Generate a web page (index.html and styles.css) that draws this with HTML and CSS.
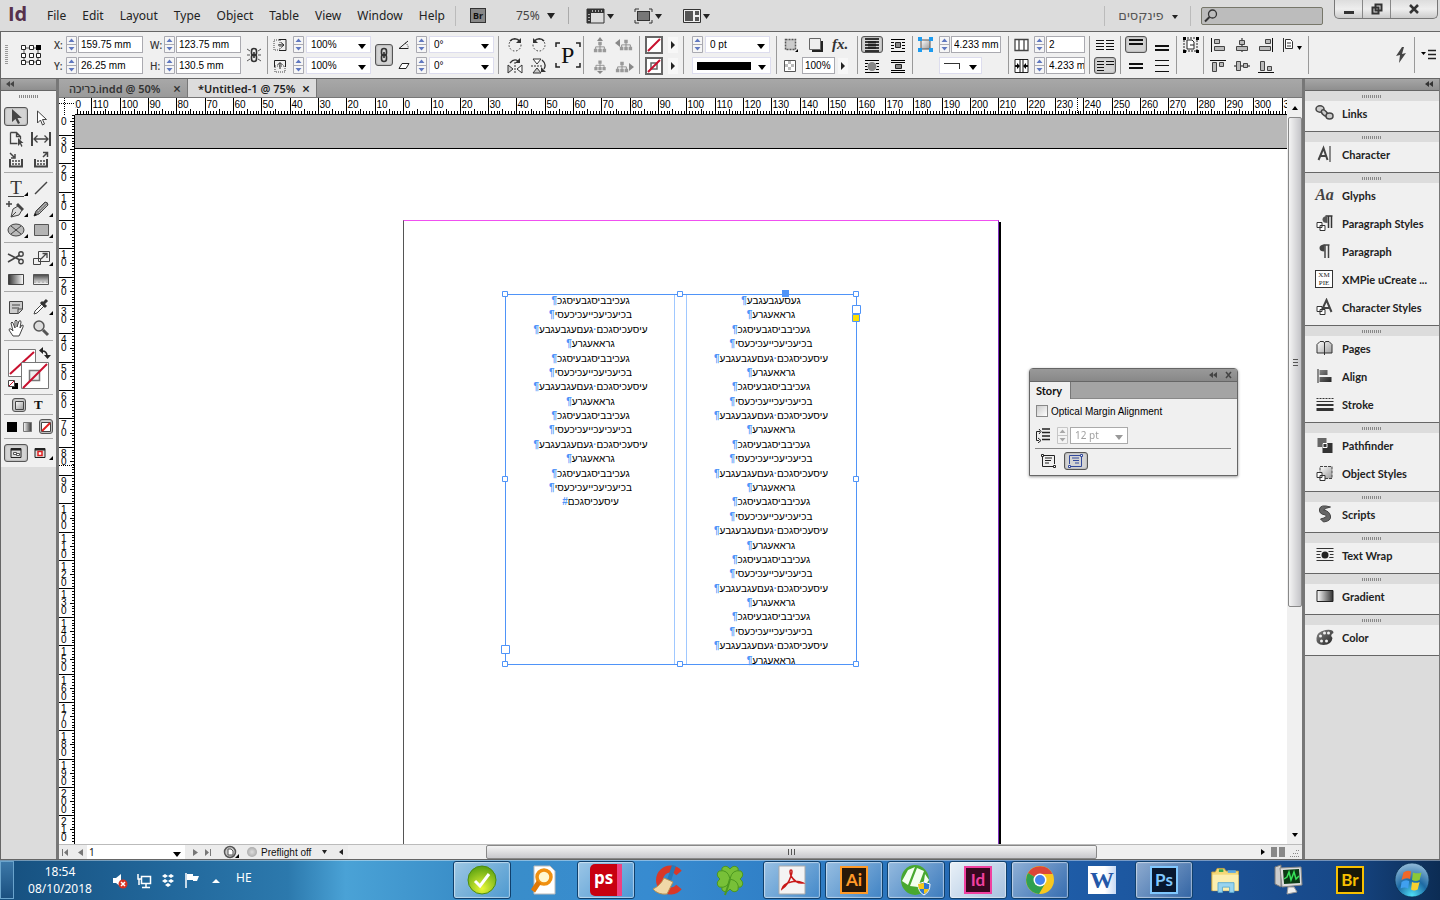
FILE: index.html
```html
<!DOCTYPE html>
<html lang="en">
<head>
    <meta charset="UTF-8">
    <title>*Untitled-1 @ 75%</title>
    <meta name="viewport" content="width=device-width, initial-scale=1.0">
    <link rel="stylesheet" href="styles.css">
</head>
<body>
    <!-- shared icons -->
    <svg class="defs" aria-hidden="true">
        <defs>
            <linearGradient id="gDark" x1="0" y1="0" x2="1" y2="1"><stop offset="0" stop-color="#888"/><stop offset="1" stop-color="#222"/></linearGradient>
            <linearGradient id="gFade" x1="0" x2="1"><stop offset="0" stop-color="#333"/><stop offset="1" stop-color="#fff"/></linearGradient>
            <linearGradient id="gFadeR" x1="0" x2="1"><stop offset="0" stop-color="#fff"/><stop offset="1" stop-color="#333"/></linearGradient>
            <linearGradient id="gLight" x1="0" y1="0" x2="1" y2="1"><stop offset="0" stop-color="#fff"/><stop offset="1" stop-color="#999"/></linearGradient>
            <linearGradient id="gFeather" x1="0" y1="0" x2="0" y2="1"><stop offset="0" stop-color="#444"/><stop offset="1" stop-color="#fff"/></linearGradient>
            <radialGradient id="gGreen" cx=".5" cy=".8" r=".8"><stop offset="0" stop-color="#e8f838"/><stop offset="1" stop-color="#58a010"/></radialGradient>
            <radialGradient id="gOrb" cx=".5" cy=".95" r=".9"><stop offset="0" stop-color="#4fe0f8"/><stop offset=".5" stop-color="#1d6aa4"/><stop offset="1" stop-color="#8ab4d4"/></radialGradient>
        </defs>
        <symbol id="spin" viewBox="0 0 11 17"><path d="M.5.5h10v16H.5zM.5 8.500h10" fill="#f6f6f6" stroke="#aaaab2"/><path d="M2.500 6h6l-3-3.500zM2.500 11h6l-3 3.500z" fill="#6078c0"/></symbol>
        <symbol id="right" viewBox="0 0 10 16"><path d="M0 0h10v16H0z" fill="#f7f7f7"/><path d="M3 4l4 4-4 4z" fill="#222"/></symbol>
        <symbol id="chain" viewBox="0 0 14 16"><g fill="none" stroke="#333" stroke-width="1.600"><rect x="4.500" y="1.500" width="5" height="7" rx="2.500"/><rect x="4.500" y="7.500" width="5" height="7" rx="2.500"/><path d="M7 5v6"/></g></symbol>
        <symbol id="tree" viewBox="0 0 18 16"><path d="M9 4v5M4 12V9h10v3M9 9v3" fill="none" stroke="#888"/><path d="M7 3h4v4H7zM2 11h4v4H2zM7 11h4v4H7zM12 11h4v4h-4z" fill="#999"/></symbol>
        <symbol id="rot" viewBox="0 0 16 16"><circle cx="8" cy="8" r="6" fill="none" stroke="#333" stroke-dasharray="1.500 1.800"/><path d="M3 4a6 6 0 0 1 9.500 0" fill="none" stroke="#333" stroke-width="1.500"/><path d="M14 1v5H9z" fill="#333"/></symbol>
        <symbol id="corner" viewBox="0 0 4 4"><path d="M4 0v4H0z"/></symbol>
    </svg>

    <header class="menubar">
        <b class="logo">Id</b>
        <nav>
            <button>File</button><button>Edit</button><button>Layout</button><button>Type</button><button>Object</button><button>Table</button><button>View</button><button>Window</button><button>Help</button>
        </nav>
        <div class="viewtools">
            <button class="bridge">Br</button>
            <label class="zoom"><select aria-label="Zoom"><option>75%</option></select></label>
            <button aria-label="View options"><svg width="28" height="18"><path d="M1 2h17v14H1z" fill="#ddd" stroke="#333"/><path d="M1 2h17v4H1zM1 2h4v14H1z" fill="#333"/><path d="M6 4h11M3 7v8" stroke="#aaa" stroke-width="2" stroke-dasharray="1 2"/><path d="M21 7h7l-3.500 5z" fill="#222"/></svg></button>
            <button aria-label="Screen mode"><svg width="28" height="18"><path d="M1 5V2h4M15 2h3v3M18 13v3h-3M5 16H1v-3" fill="none" stroke="#333"/><rect x="3.500" y="4.500" width="12" height="9" fill="#777" stroke="#333"/><path d="M21 7h7l-3.500 5z" fill="#222"/></svg></button>
            <button aria-label="Arrange documents"><svg width="28" height="18"><path d="M1.500 2.500h17v13h-17z" fill="#eee" stroke="#333"/><path d="M3 4h8v10H3zM13 4h4v4h-4zM13 10h4v4h-4z" fill="#555"/><path d="M21 7h7l-3.500 5z" fill="#222"/></svg></button>
        </div>
        <button class="workspace" lang="he">פינקסים</button>
        <label class="search"><svg width="14" height="14"><circle cx="8.500" cy="5" r="4" fill="none" stroke="#333" stroke-width="1.300"/><path d="M5.500 8L1 12.500" stroke="#333" stroke-width="2"/></svg><input type="search" aria-label="Search"></label>
        <div class="winbtns">
            <button aria-label="Minimize"><svg width="12" height="12"><path d="M1 8h10v3H1z" fill="#333"/></svg></button>
            <button aria-label="Restore"><svg width="12" height="12"><path d="M4.500 1.500h6v6h-6zM1.500 4.500h6v6h-6z" fill="#ddd" stroke="#333" stroke-width="2"/></svg></button>
            <button class="close" aria-label="Close"><svg width="12" height="12"><path d="M2 2l8 8M10 2l-8 8" stroke="#333" stroke-width="2.500"/></svg></button>
        </div>
    </header>

    <div class="control">
        <div class="grp g-ref">
            <i class="vgrip"></i>
            <svg width="20" height="20"><path d="M3 3h14v14H3z" fill="none" stroke="#555"/><g fill="#fff" stroke="#222"><path d="M.5.5h4v4h-4zM8.500.5h4v4h-4zM.5 8.500h4v4h-4zM8.500 8.500h4v4h-4zM15.500 8.500h4v4h-4zM.5 15.500h4v4h-4zM8.500 15.500h4v4h-4zM15.500 15.500h4v4h-4z"/></g><path d="M15 0h5v5h-5z"/></svg>
        </div>
        <div class="grp g-xy">
            <label for="x">X:</label><svg class="spin"><use href="#spin"/></svg><input id="x" value="159.75 mm">
            <label for="w">W:</label><svg class="spin"><use href="#spin"/></svg><input id="w" value="123.75 mm">
            <label for="y">Y:</label><svg class="spin"><use href="#spin"/></svg><input id="y" value="26.25 mm">
            <label for="h">H:</label><svg class="spin"><use href="#spin"/></svg><input id="h" value="130.5 mm">
        </div>
        <button class="constrain" aria-label="Constrain"><svg width="14" height="16"><use href="#chain"/><path d="M0 2l3 2M0 8h3M0 14l3-2M14 2l-3 2M14 8h-3M14 14l-3-2" stroke="#555"/></svg></button>
        <div class="grp sep g-scale">
            <svg width="14" height="14"><path d="M1 2h6v10H1z" fill="none" stroke="#444" stroke-dasharray="1 1"/><path d="M6 1.500h7v11H6" fill="none" stroke="#222"/><path d="M5 7h5M8 4.500L11 7 8 9.500" fill="none" stroke="#222"/></svg>
            <svg class="spin"><use href="#spin"/></svg><span class="combo"><select aria-label="Scale X"><option>100%</option></select></span>
            <svg width="14" height="14"><path d="M2 7h10v6H2z" fill="none" stroke="#444" stroke-dasharray="1 1"/><path d="M1.500 8V1.500h11V8" fill="none" stroke="#222"/><path d="M7 10V4M4.500 6L7 3.500 9.500 6" fill="none" stroke="#222"/></svg>
            <svg class="spin"><use href="#spin"/></svg><span class="combo"><select aria-label="Scale Y"><option>100%</option></select></span>
        </div>
        <button class="link on" aria-label="Link scale"><svg width="14" height="16"><use href="#chain"/></svg></button>
        <div class="grp g-angle">
            <svg width="14" height="14"><path d="M11 3L2 10.500h9" fill="none" stroke="#222"/><path d="M8 5q4 2 3 6" fill="none" stroke="#222" stroke-dasharray="1 1"/></svg>
            <svg class="spin"><use href="#spin"/></svg><span class="combo"><select aria-label="Rotation"><option>0°</option></select></span>
            <svg width="14" height="14"><path d="M5 4.500h7l-3 5H2z" fill="#fff" stroke="#222"/></svg>
            <svg class="spin"><use href="#spin"/></svg><span class="combo"><select aria-label="Shear"><option>0°</option></select></span>
        </div>
        <div class="grp sep g-rotate">
            <button aria-label="Rotate 90 clockwise"><svg width="16" height="16"><use href="#rot"/></svg></button>
            <button aria-label="Rotate 90 anticlockwise"><svg width="16" height="16"><g transform="matrix(-1 0 0 1 16 0)"><use href="#rot" width="16" height="16"/></g></svg></button>
            <button class="pbox" aria-label="Reference P"><svg width="26" height="26"><path d="M1 5V1h4M21 1h4v4M25 21v4h-4M5 25H1v-4" fill="none" stroke="#222" stroke-width="1.500"/></svg><span>P</span></button>
            <button aria-label="Flip horizontal"><svg width="16" height="16"><path d="M8 4v12" stroke="#333" stroke-dasharray="2 1"/><path d="M1 15V7l5 4z" fill="#ccc" stroke="#333"/><path d="M15 15V7l-5 4z" fill="#fff" stroke="#333"/><path d="M3 5q4-5 8-2" fill="none" stroke="#333" stroke-width="1.300"/><path d="M13 0v5H8z" fill="#333"/></svg></button>
            <button aria-label="Flip vertical"><svg width="16" height="16"><path d="M0 8h12" stroke="#333" stroke-dasharray="2 1"/><path d="M2 1h8L6 6z" fill="#fff" stroke="#333"/><path d="M2 15h8l-4-5z" fill="#ccc" stroke="#333"/><path d="M11 2q5 4 2 9" fill="none" stroke="#333" stroke-width="1.300"/><path d="M10 9v5h5z" fill="#333"/></svg></button>
        </div>
        <div class="grp sep g-tree">
            <svg width="18" height="16"><use href="#tree" y="2" width="18" height="14"/><path d="M6 4h6L9 0z" fill="#888"/></svg>
            <svg width="20" height="16"><path d="M0 6l5-4v8z" fill="#888"/><use href="#tree" x="3" width="16" height="14"/></svg>
            <svg width="18" height="16"><use href="#tree" width="18" height="13"/><path d="M6 13h6l-3 3z" fill="#888"/></svg>
            <svg width="20" height="16"><path d="M19 9l-5-4v8z" fill="#888"/><use href="#tree" x="-1" y="1" width="16" height="14"/></svg>
        </div>
        <div class="grp sep g-swatch">
            <button aria-label="Fill"><svg width="18" height="18"><path d="M1 1h16v16H1z" fill="#fff" stroke="#666" stroke-width="2"/><path d="M3 15L15 3" stroke="#c8102e" stroke-width="2"/></svg></button><svg width="10" height="16"><use href="#right"/></svg>
            <button aria-label="Stroke"><svg width="18" height="18"><path d="M1 1h16v16H1z" fill="#fff" stroke="#666" stroke-width="2"/><path d="M6 6h6v6H6z" fill="none" stroke="#666" stroke-width="1.500"/><path d="M3 15L15 3" stroke="#c8102e" stroke-width="2"/></svg></button><svg width="10" height="16"><use href="#right"/></svg>
        </div>
        <div class="grp sep g-stroke">
            <svg class="spin"><use href="#spin"/></svg><span class="combo"><select aria-label="Weight"><option>0 pt</option></select></span>
            <span class="combo wide line"><select aria-label="Stroke type"><option></option></select></span>
        </div>
        <div class="grp sep g-fx">
            <svg width="16" height="16"><path d="M2.500 2.500h10v10h-10z" fill="#ccc" stroke="#555" stroke-width="1.500" stroke-dasharray="2 1"/><use href="#corner" x="12" y="12" width="3" height="3"/></svg>
            <svg width="16" height="16"><path d="M4 4h11v11H4z" fill="#222"/><path d="M1.500 1.500h11v11h-11z" fill="#eee" stroke="#666"/></svg>
            <button class="fx">fx.</button>
            <svg width="14" height="14"><path d="M1.500 1.500h11v11h-11z" fill="#fff" stroke="#555"/><path d="M5 2h3v3H5zM2 5h3v3H2zM8 5h3v3H8zM5 8h3v3H5z" fill="#bbb"/></svg>
            <input aria-label="Opacity" value="100%"><svg width="10" height="16"><use href="#right"/></svg>
        </div>
        <div class="grp sep g-wrap">
            <button class="on" aria-label="No wrap"><svg width="16" height="14"><path d="M4 3h8v8H4z" fill="#888"/><path d="M1 1h14M1 4h14M1 7h14M1 10h14M1 13h14" stroke="#000" stroke-width="1.600"/></svg></button>
            <button aria-label="Wrap box"><svg width="16" height="14"><path d="M1 1.500h14M1 4.500h3M1 7.500h3M1 10.500h3M12 4.500h3M12 7.500h3M12 10.500h3M1 13.500h14" stroke="#000"/><path d="M5.500 4.500h5v5h-5z" fill="#888" stroke="#222"/></svg></button>
            <button aria-label="Wrap shape"><svg width="16" height="14"><path d="M1 1.500h14M1 4.500h3M1 7.500h2M1 10.500h3M12 4.500h3M13 7.500h2M12 10.500h3M1 13.500h14" stroke="#000"/><circle cx="8" cy="7.500" r="4.500" fill="#888"/></svg></button>
            <button aria-label="Jump object"><svg width="16" height="14"><path d="M1 1.500h14M1 3.500h14M1 11.500h14M1 13.500h14" stroke="#000"/><path d="M5.500 5.500h6v4h-6z" fill="#888" stroke="#222"/></svg></button>
        </div>
        <div class="grp sep g-corner">
            <svg width="15" height="15"><path d="M3 3h9v9H3z" fill="url(#gLight)" stroke="#555"/><path d="M0 0h4v4H0zM11 0h4v4h-4zM0 11h4v4H0zM11 11h4v4h-4z" fill="#1c9bf0"/></svg>
            <svg class="spin"><use href="#spin"/></svg><input aria-label="Corner size" value="4.233 mm">
            <span class="combo wide cornershape"><select aria-label="Corner shape"><option></option></select></span>
        </div>
        <div class="grp sep g-cols">
            <svg width="15" height="14"><path d="M1 1.500h13v11H1zM5 1v12M10 1v12" fill="#fff" stroke="#444" stroke-width="1.300"/></svg><svg class="spin"><use href="#spin"/></svg><input aria-label="Columns" value="2">
            <svg width="15" height="14"><path d="M1 .5h13v13H1z" fill="#fff" stroke="#222"/><path d="M6 0v14M9 0v14" stroke="#111"/><path d="M1 7h3M14 7h-3" stroke="#111" stroke-width="2"/><path d="M3 4l3 3-3 3zM12 4L9 7l3 3z"/></svg><svg class="spin"><use href="#spin"/></svg><input aria-label="Gutter" value="4.233 mm">
        </div>
        <div class="grp sep g-one">
            <button aria-label="Unbalanced columns"><svg width="18" height="12"><path d="M0 1.500h8M0 4.500h8M0 7.500h8M0 10.500h8M10 1.500h8M10 4.500h8M10 7.500h8M10 10.500h8" stroke="#111"/></svg></button>
            <button class="on" aria-label="Balance columns"><svg width="18" height="12"><path d="M1 1.500h7M1 4.500h7M1 7.500h7M1 10.500h7M10 1.500h8M10 4.500h8" stroke="#111"/></svg></button>
        </div>
        <div class="grp sep g-just">
            <button class="on" aria-label="Align top"><svg width="16" height="14"><path d="M1 2h14M1 6h14" stroke="#111" stroke-width="2"/></svg></button>
            <button aria-label="Align bottom"><svg width="16" height="14"><path d="M1 8h14M1 12h14" stroke="#111" stroke-width="2"/></svg></button>
            <button aria-label="Align center"><svg width="16" height="14"><path d="M1 5h14M1 9h14" stroke="#111" stroke-width="2"/></svg></button>
            <button aria-label="Justify"><svg width="16" height="14"><path d="M1 1.500h14M1 6.500h14M1 12.500h14" stroke="#111"/></svg></button>
        </div>
        <div class="grp sep g-fit">
            <button aria-label="Fit content"><svg width="18" height="18"><path d="M2 2h13v13H2z" fill="none" stroke="#222" stroke-dasharray="2 1"/><path d="M5 4h5l2 2v7H5zM8 9h4" fill="#fff" stroke="#222"/><path d="M1 1h3v3H1zM14 1h3v3h-3zM1 14h3v3H1zM14 14h3v3h-3z"/></svg></button>
        </div>
        <div class="grp sep g-align">
            <svg width="16" height="14"><path d="M1.500 0v14" stroke="#111"/><path d="M4.500 1.500h5v4h-5zM4.500 8.500h10v4h-10z" fill="#bbb" stroke="#444"/></svg>
            <svg width="16" height="14"><path d="M8 0v14" stroke="#111"/><path d="M5.500 2.500h5v4h-5zM2.500 8.500h11v4h-11z" fill="#bbb" stroke="#444"/></svg>
            <svg width="16" height="14"><path d="M14.500 0v14" stroke="#111"/><path d="M7.500 1.500h5v4h-5zM1.500 8.500h11v4h-11z" fill="#bbb" stroke="#444"/></svg>
            <svg width="20" height="14"><path d="M1.500 0v14M3.500 1.500h5l2 2v7h-7z" fill="#fff" stroke="#333"/><path d="M5 5h4M5 8h4" stroke="#333"/><path d="M15 8h5l-2.500 4z"/></svg>
            <svg width="16" height="14"><path d="M0 1.500h16" stroke="#111"/><path d="M2.500 3.500h4v9h-4zM9.500 3.500h4v4h-4z" fill="#bbb" stroke="#444"/></svg>
            <svg width="16" height="14"><path d="M0 7h16" stroke="#111"/><path d="M2.500 2.500h4v9h-4zM9.500 4.500h4v4h-4z" fill="#bbb" stroke="#444"/></svg>
            <svg width="16" height="14"><path d="M0 13.500h16" stroke="#111"/><path d="M2.500 2.500h4v9h-4zM9.500 7.500h4v4h-4z" fill="#bbb" stroke="#444"/></svg>
        </div>
        <div class="grp sep g-end">
            <button aria-label="Quick apply"><svg width="12" height="18"><path d="M7 1L1 10l4-1-1 8 7-10-4 1 2-7z" fill="#444"/></svg></button>
            <button class="panelmenu" aria-label="Panel menu"><svg width="15" height="14"><path d="M0 4h5l-2.500 3z"/><path d="M7 2.500h8M7 6.500h8M7 10.500h8" stroke="#222" stroke-width="1.300"/></svg></button>
        </div>
    </div>

    <main class="work">
        <aside class="toolbox">
            <div class="bar"><svg width="9" height="7"><path d="M4 0v6L0 3zM8 0v6L4 3z" fill="#444"/></svg></div>
            <div class="tools">
                <i class="hgrip"></i>
                <div class="toolset">
                    <button class="on" aria-label="Selection"><svg width="18" height="18"><path d="M5 1v13l3.500-3 2.500 5 2-1-2.500-5H15z" fill="#444"/></svg></button>
                    <button aria-label="Direct selection"><svg width="18" height="18"><path d="M5.500 2v12l3-3 2 5 2-1-2-4.500h4z" fill="#fff" stroke="#444"/></svg></button>
                    <button aria-label="Page"><svg width="18" height="18"><path d="M3.500 2.500h6l4 4v3M3.500 2.500v11h7M9.500 2.500v4h4" fill="none" stroke="#444" stroke-width="1.300"/><path d="M11 8v8l2-2 1.500 3 1-1-1.500-3h2.500z" fill="#444"/></svg></button>
                    <button aria-label="Gap"><svg width="20" height="18"><path d="M1 2v14M19 2v14" stroke="#444" stroke-width="2"/><path d="M3 9h14M6.500 5.500L3 9l3.500 3.500M13.500 5.500L17 9l-3.500 3.500" fill="none" stroke="#444" stroke-width="1.300"/></svg></button>
                    <button aria-label="Content collector"><svg width="18" height="18"><path d="M3 8v7.500h12V8" fill="none" stroke="#444" stroke-width="2"/><path d="M5 10h8M5 13h8" stroke="#444" stroke-width="1.500" stroke-dasharray="2 1"/><path d="M3 2l4 4M8 3v4H4" fill="none" stroke="#444" stroke-width="1.500"/></svg></button>
                    <button aria-label="Content placer"><svg width="18" height="18"><path d="M3 8v7.500h12V8" fill="none" stroke="#444" stroke-width="2"/><path d="M5 10h8M5 13h8" stroke="#444" stroke-width="1.500" stroke-dasharray="2 1"/><path d="M11 6l4-4M11 1.500h4.500V6" fill="none" stroke="#444" stroke-width="1.500"/></svg></button>
                </div>
                <div class="toolset">
                    <button class="more type" aria-label="Type"><span>T</span></button>
                    <button aria-label="Line"><svg width="18" height="18"><path d="M3 15L15 3" stroke="#444" stroke-width="1.500"/></svg></button>
                    <button class="more" aria-label="Pen"><svg width="20" height="18"><path d="M0 4h6M3 1v6" stroke="#444" stroke-width="1.500"/><path d="M5 17l2-8 5-3 4 4-3 5zM5 17l5-5" fill="#ddd" stroke="#444"/><path d="M12 3l6 6-2 2-6-6z" fill="#444"/></svg></button>
                    <button class="more" aria-label="Pencil"><svg width="18" height="18"><path d="M2 16l2-5 9-9q3 0 3 3l-9 9z" fill="#888" stroke="#444"/><path d="M6 11l8-8M7 13l8-8" stroke="#ccc" stroke-dasharray="2 1"/><path d="M2 16l1-3 2 2z" fill="#111"/></svg></button>
                    <button class="more" aria-label="Ellipse frame"><svg width="18" height="18"><ellipse cx="9" cy="9" rx="8" ry="6" fill="#bbb" stroke="#444"/><path d="M4 5l10 8M14 5L4 13" stroke="#444"/></svg></button>
                    <button class="more" aria-label="Rectangle"><svg width="18" height="18"><path d="M2.500 3.500h14v11h-14z" fill="#b4b4b4" stroke="#555"/></svg></button>
                </div>
                <div class="toolset">
                    <button aria-label="Scissors"><svg width="18" height="18"><path d="M1 5l12 6M1 13L13 6" stroke="#444" stroke-width="1.600"/><circle cx="14" cy="5" r="2.200" fill="none" stroke="#444" stroke-width="1.400"/><circle cx="14" cy="12.500" r="2.200" fill="none" stroke="#444" stroke-width="1.400"/></svg></button>
                    <button class="more" aria-label="Scale"><svg width="18" height="18"><path d="M6.500 2.500h11v10h-11zM1.500 9.500h7v6h-7z" fill="none" stroke="#444"/><path d="M9 10l5-5M10.500 4.500H15V9" fill="none" stroke="#444" stroke-width="1.300"/></svg></button>
                    <button aria-label="Gradient swatch"><svg width="18" height="18"><path d="M1.500 4.500h15v10h-15z" fill="url(#gFade)" stroke="#444"/></svg></button>
                    <button aria-label="Gradient feather"><svg width="18" height="18"><path d="M1.500 4.500h15v10h-15z" fill="url(#gFeather)" stroke="#555"/><path d="M2 12h14" stroke="#bbb" stroke-width="2" stroke-dasharray="2 2"/></svg></button>
                </div>
                <div class="toolset">
                    <button aria-label="Note"><svg width="18" height="18"><path d="M2.500 3.500h13v8l-4 4h-9z" fill="#ccc" stroke="#444"/><path d="M5 7h8M5 10h7M11 15v-4h4" fill="none" stroke="#444"/></svg></button>
                    <button class="more" aria-label="Eyedropper"><svg width="18" height="18"><path d="M2 16l1-3 7-7 2 2-7 7z" fill="#fff" stroke="#444"/><path d="M9 4l5 5M11 6l4-4" stroke="#333" stroke-width="3"/></svg></button>
                    <button aria-label="Hand"><svg width="18" height="18"><path d="M6 17l-4-6q0-2 2-1l2 2-2-8q1-2 2 0l2 5V2q1-2 2 0v6l2-6q2-1 2 1l-1 6 2-3q2 0 1 2l-3 7-1 2z" fill="#fff" stroke="#444"/></svg></button>
                    <button aria-label="Zoom"><svg width="18" height="18"><circle cx="7" cy="7" r="5" fill="#ddd" stroke="#555" stroke-width="1.500"/><path d="M11 11l5 5" stroke="#555" stroke-width="3"/></svg></button>
                </div>
                <div class="strip colors">
                    <svg width="44" height="44"><path d="M1.500 3.500h27v27h-27z" fill="#fff" stroke="#777"/><path d="M3 28L27 6" stroke="#c8102e" stroke-width="2"/><path d="M14.500 16.500h27v26h-27z" fill="#fff" stroke="#777"/><path d="M22.500 24.500h10v10h-10z" fill="#eee" stroke="#777" stroke-width="1.500"/><path d="M16 42L40 18" stroke="#c8102e" stroke-width="2"/><path d="M35 5q5 0 5 5" fill="none" stroke="#222" stroke-width="1.500"/><path d="M36 1v7l-4-3.500zM37 9h7l-3.500 4z" fill="#222"/><path d="M5 37h6v6H5z"/><path d="M1.500 34.500h6v6h-6z" fill="#fff" stroke="#444"/><path d="M2 40l5-5" stroke="#c8102e"/></svg>
                </div>
                <div class="strip row fmt">
                    <button class="on" aria-label="Formatting affects container"><svg width="10" height="10"><path d="M1.500 1.500h8v8h-8z" fill="url(#gLight)" stroke="#444"/></svg></button>
                    <button class="t" aria-label="Formatting affects text">T</button>
                </div>
                <div class="strip row apply">
                    <button aria-label="Color"><svg width="10" height="10"><path d="M0 0h10v10H0z"/></svg></button>
                    <button aria-label="Gradient"><svg width="10" height="10"><path d="M.5.5h8v9h-8z" fill="url(#gFadeR)" stroke="#777"/></svg></button>
                    <button class="on" aria-label="None"><svg width="10" height="10"><path d="M.5.5h9v9h-9z" fill="#fff" stroke="#444"/><path d="M1 9l8-8" stroke="#e02020" stroke-width="2"/></svg></button>
                </div>
                <div class="strip row modes">
                    <button class="on" aria-label="Normal"><svg width="12" height="12"><path d="M1 1.500h10v9H1z" fill="#ddd" stroke="#222"/><path d="M1 2.500h10" stroke="#222" stroke-width="2"/><path d="M3.500 5.500h3v2h-3zM6.500 6.500h3v2h-3z" fill="#fff" stroke="#555"/></svg></button>
                    <button class="more" aria-label="Preview"><svg width="12" height="12"><path d="M1 1.500h10v9H1z" fill="#ddd" stroke="#222"/><path d="M1 2.500h10" stroke="#222" stroke-width="2"/><path d="M4 4.500h4v4H4z" fill="#fff" stroke="#e02020" stroke-width="1.500"/></svg></button>
                </div>
            </div>
        </aside>

        <section class="doc">
            <div class="tabs">
                <button class="tab">כריכה.indd @ 50% <i>×</i></button>
                <button class="tab active">*Untitled-1 @ 75% <i>×</i></button>
            </div>
            <div class="sheet">
                <svg class="origin" width="16" height="17"><path d="M0 5.500h16M5.500 0v17" stroke="#000" stroke-dasharray="1 1"/></svg>
                <svg class="hruler" id="hruler"></svg>
                <svg class="vruler" id="vruler"></svg>
                <div class="canvas" id="canvas">
                    <div class="page"></div>
                    <div class="frame" dir="rtl" lang="he">
                        <div class="col">
                            <p>געסעגבעגבע<i>¶</i></p>
                            <p>גראאעגרע<i>¶</i></p>
                            <p>געכיבביסגבעיסגכ<i>¶</i></p>
                            <p>בכיעכיעכייעכיכעסי<i>¶</i></p>
                            <p>עיסעכיסגכם<i>·</i>געםעגבעגבע<i>¶</i></p>
                            <p>גראאעגרע<i>¶</i></p>
                            <p>געכיבביסגבעיסגכ<i>¶</i></p>
                            <p>בכיעכיעכייעכיכעסי<i>¶</i></p>
                            <p>עיסעכיסגכם<i>·</i>געםעגבעגבע<i>¶</i></p>
                            <p>גראאעגרע<i>¶</i></p>
                            <p>געכיבביסגבעיסגכ<i>¶</i></p>
                            <p>בכיעכיעכייעכיכעסי<i>¶</i></p>
                            <p>עיסעכיסגכם<i>·</i>געםעגבעגבע<i>¶</i></p>
                            <p>גראאעגרע<i>¶</i></p>
                            <p>געכיבביסגבעיסגכ<i>¶</i></p>
                            <p>בכיעכיעכייעכיכעסי<i>¶</i></p>
                            <p>עיסעכיסגכם<i>·</i>געםעגבעגבע<i>¶</i></p>
                            <p>גראאעגרע<i>¶</i></p>
                            <p>געכיבביסגבעיסגכ<i>¶</i></p>
                            <p>בכיעכיעכייעכיכעסי<i>¶</i></p>
                            <p>עיסעכיסגכם<i>·</i>געםעגבעגבע<i>¶</i></p>
                            <p>גראאעגרע<i>¶</i></p>
                            <p>געכיבביסגבעיסגכ<i>¶</i></p>
                            <p>בכיעכיעכייעכיכעסי<i>¶</i></p>
                            <p>עיסעכיסגכם<i>·</i>געםעגבעגבע<i>¶</i></p>
                            <p>גראאעגרע<i>¶</i></p>
                        </div>
                        <div class="col">
                            <p>געכיבביסגבעיסגכ<i>¶</i></p>
                            <p>בכיעכיעכייעכיכעסי<i>¶</i></p>
                            <p>עיסעכיסגכם<i>·</i>געםעגבעגבע<i>¶</i></p>
                            <p>גראאעגרע<i>¶</i></p>
                            <p>געכיבביסגבעיסגכ<i>¶</i></p>
                            <p>בכיעכיעכייעכיכעסי<i>¶</i></p>
                            <p>עיסעכיסגכם<i>·</i>געםעגבעגבע<i>¶</i></p>
                            <p>גראאעגרע<i>¶</i></p>
                            <p>געכיבביסגבעיסגכ<i>¶</i></p>
                            <p>בכיעכיעכייעכיכעסי<i>¶</i></p>
                            <p>עיסעכיסגכם<i>·</i>געםעגבעגבע<i>¶</i></p>
                            <p>גראאעגרע<i>¶</i></p>
                            <p>געכיבביסגבעיסגכ<i>¶</i></p>
                            <p>בכיעכיעכייעכיכעסי<i>¶</i></p>
                            <p>עיסעכיסגכם<i>#</i></p>
                        </div>
                        <svg class="handles" width="364" height="384"><path d="M176.500 8v369M188.500 8v369" stroke="#a0c8ff"/><g fill="#fff" stroke="#4f94f8"><path d="M4.500 4.500h5v5h-5zM179.500 4.500h5v5h-5zM355.500 4.500h5v5h-5zM4.500 189.500h5v5h-5zM355.500 189.500h5v5h-5zM4.500 374.500h5v5h-5zM179.500 374.500h5v5h-5zM355.500 374.500h5v5h-5zM3.500 358.500h8v8h-8zM354.500 18.500h8v8h-8z"/><path d="M354.500 27.500h7v7h-7z" fill="#ffe000"/></g><path d="M284 3h7v7h-7z" fill="#4f94f8"/></svg>
                    </div>

                    <div class="story">
                        <div class="storybar"><svg width="24" height="8"><path d="M4 1v6L0 4zM8 1v6L4 4z" fill="#444"/><path d="M17 1l5 6M22 1l-5 6" stroke="#444" stroke-width="1.500"/></svg></div>
                        <div class="storytabs"><b>Story</b></div>
                        <div class="storybody">
                            <label class="check"><input type="checkbox">Optical Margin Alignment</label>
                            <div class="row">
                                <svg width="16" height="16"><path d="M7 2h8M7 5.500h8M7 9h8M7 12.500h8" stroke="#222" stroke-width="1.500"/><path d="M5 4.500H1.500v9H4M4 2l2 2.500L4 7M3 11l3 2.500L3 16" fill="none" stroke="#222"/></svg>
                                <svg class="spin dim"><use href="#spin"/></svg>
                                <span class="combo"><select aria-label="Size" disabled><option>12 pt</option></select></span>
                            </div>
                            <div class="row dirs">
                                <button aria-label="Left to right"><svg width="18" height="16"><path d="M2.500 4v9.500h11M4 2.500h10.500V11" fill="none" stroke="#222"/><path d="M5 5h7M5 7.500h6M5 10h4" stroke="#222"/><path d="M1.500 1.500h2v2h-2zM13.500 12.500h2v2h-2z" fill="#fff" stroke="#222"/></svg></button>
                                <button class="on" aria-label="Right to left"><svg width="18" height="16"><path d="M14.500 4v9.500h-11M13 2.500H2.500V11" fill="none" stroke="#334a9c"/><path d="M5 5h7M6 7.500h6M8 10h4" stroke="#334a9c"/><path d="M13.500 1.500h2v2h-2zM1.500 12.500h2v2h-2z" fill="#fff" stroke="#334a9c"/></svg></button>
                            </div>
                        </div>
                    </div>
                </div>
                <div class="vscroll"><button aria-label="Scroll up"><svg width="8" height="8"><path d="M1 6h6L4 2z"/></svg></button><i class="thumb"></i><button aria-label="Scroll down"><svg width="8" height="8"><path d="M1 2h6L4 6z"/></svg></button></div>
            </div>
            <footer class="status">
                <svg width="28" height="12"><path d="M3.500 3v7" stroke="#777"/><path d="M9 3v7L5 6.500zM24 3v7l-5-3.500z" fill="#777"/></svg>
                <span class="combo pageno"><select aria-label="Page"><option>1</option></select></span>
                <svg width="28" height="12"><path d="M8 3v7l5-3.500zM20 3v7l4-3.500z" fill="#777"/><path d="M25.500 3v7" stroke="#777"/></svg>
                <svg class="open" width="16" height="14"><circle cx="7" cy="7" r="5.500" fill="#ccc" stroke="#555" stroke-width="1.500"/><path d="M5 4h3l2 2v4H5z" fill="#fff" stroke="#555"/><path d="M16 9v4h-4z"/></svg>
                <i class="lamp"></i><span class="flight">Preflight off</span>
                <svg class="drop" width="28" height="12"><path d="M2 4h5L4.500 8zM23 3v6l-4-3z" fill="#222"/></svg>
                <div class="hscroll"><i class="thumb"></i></div>
                <svg width="42" height="12"><path d="M1 3l4 3-4 3z"/><path d="M11 1h6v10h-6zM19 1h6v10h-6z" fill="#888"/><path d="M30 10.500h9M33 7.500h6M36 4.500h3" stroke="#888" stroke-dasharray="1 1"/></svg>
            </footer>
        </section>

        <aside class="dock">
            <div class="bar"><svg width="9" height="7"><path d="M4 0v6L0 3zM8 0v6L4 3z" fill="#333"/></svg></div>
            <div class="set"><i class="hgrip"></i>
                <button><svg viewBox="0 0 18 18"><g fill="#ccc" stroke="#444" stroke-width="1.500"><ellipse cx="4.500" cy="5" rx="4" ry="3.200"/><ellipse cx="9" cy="9" rx="3.800" ry="2.200" transform="rotate(45 9 9)"/><ellipse cx="14" cy="12" rx="3.500" ry="3"/></g></svg>Links</button>
            </div>
            <div class="set"><i class="hgrip"></i>
                <button><svg viewBox="0 0 18 18"><path d="M3 15L8 3l4 12M5 11h6" fill="none" stroke="#444" stroke-width="2"/><path d="M14.500 1v16" stroke="#222"/></svg>Character</button>
            </div>
            <div class="set"><i class="hgrip"></i>
                <button><em>Aa</em>Glyphs</button>
                <button><svg viewBox="0 0 18 18"><path d="M16 2v12M13 2v12M10 2h7" stroke="#333" stroke-width="1.500"/><path d="M12 2v7q-5 0-5-3.500T12 2z" fill="#555"/><path d="M4.500 11.500h5v5h-5zM1.500 8.500h5v5h-5z" fill="#fff" stroke="#333"/></svg>Paragraph Styles</button>
                <button><svg viewBox="0 0 18 18"><path d="M13 3v13M9.500 3v13M8 3h6" stroke="#444" stroke-width="1.500"/><path d="M9 2.500v7q-5 0-5-3.500T9 2.500z" fill="#444"/></svg>Paragraph</button>
                <button><span class="xm">XM<br>PIE</span>XMPie uCreate ...</button>
                <button><svg viewBox="0 0 18 18"><path d="M6 13l5-11 5 12M8 10h7" fill="none" stroke="#444" stroke-width="2"/><path d="M4.500 11.500h5v5h-5zM1.500 8.500h5v5h-5z" fill="#fff" stroke="#333"/></svg>Character Styles</button>
            </div>
            <div class="set"><i class="hgrip"></i>
                <button><svg viewBox="0 0 18 18"><path d="M9 4v12M1.500 5.500l3-3H8l1 1.500v10H1.500zM16.500 5.500l-3-3H10L9 4v10h7.500z" fill="url(#gLight)" stroke="#333"/></svg>Pages</button>
                <button><svg viewBox="0 0 18 18"><path d="M2.500 2v14" stroke="#222"/><path d="M4 3h8v5H4zM4 10h12v5H4z" fill="url(#gDark)"/></svg>Align</button>
                <button><svg viewBox="0 0 18 18"><path d="M1 3.500h17" stroke="#333" stroke-dasharray="2 1"/><path d="M1 6.500h17" stroke="#333"/><path d="M1 10h17" stroke="#333" stroke-width="2"/><path d="M1 14.500h17" stroke="#333" stroke-width="3"/></svg>Stroke</button>
            </div>
            <div class="set"><i class="hgrip"></i>
                <button><svg viewBox="0 0 18 18"><path d="M2 2h9v9H2z" fill="#666"/><path d="M7 7h10v10H7z" fill="#333"/><path d="M7.500 7.500h4v4h-4z" fill="#333" stroke="#fff"/></svg>Pathfinder</button>
                <button><svg viewBox="0 0 18 18"><path d="M4.500 2.500h12v12h-12z" fill="url(#gLight)" stroke="#444" stroke-dasharray="3 1"/><path d="M4.500 11.500h5v5h-5zM1.500 8.500h5v5h-5z" fill="#fff" stroke="#333"/></svg>Object Styles</button>
            </div>
            <div class="set"><i class="hgrip"></i>
                <button><svg viewBox="0 0 18 18"><path d="M15 2Q5-1 4 4t6 6q3 2-5 4l3 3q8-1 7-6t-7-6q2-2 7-3z" fill="#666" stroke="#444"/></svg>Scripts</button>
            </div>
            <div class="set"><i class="hgrip"></i>
                <button><svg viewBox="0 0 18 18"><path d="M1 2.500h17M1 5.500h17M1 8.500h17M1 11.500h17M1 14.500h17" stroke="#333" stroke-width="1.200"/><circle cx="9.500" cy="9" r="5" fill="#f0f0f0"/><circle cx="9.500" cy="9" r="3.500" fill="#222"/></svg>Text Wrap</button>
            </div>
            <div class="set"><i class="hgrip"></i>
                <button><svg viewBox="0 0 18 18"><path d="M1.500 3.500h16v11h-16z" fill="url(#gFadeR)" stroke="#222"/></svg>Gradient</button>
            </div>
            <div class="set"><i class="hgrip"></i>
                <button><svg viewBox="0 0 18 18"><path d="M10 2q8-1 8 3-4 2-1 5-1 7-9 7T1 10q0-6 9-8z" fill="url(#gDark)"/><g fill="#f0f0f0"><circle cx="5" cy="8" r="1.500"/><circle cx="9" cy="5" r="1.500"/><circle cx="13" cy="5" r="1.500"/><circle cx="6" cy="13" r="1.500"/><circle cx="11" cy="13" r="1.500"/></g></svg>Color</button>
            </div>
        </aside>
    </main>

    <div class="taskbar">
        <button class="desk" aria-label="Show desktop"></button>
        <div class="clock">18:54<br>08/10/2018</div>
        <div class="tray">
            <svg width="16" height="18"><path d="M1 6h3l5-4v13l-5-4H1z" fill="#fff"/><circle cx="11" cy="12" r="4.500" fill="#d83020"/><path d="M9 10l4 4M13 10l-4 4" stroke="#fff" stroke-width="1.500"/></svg>
            <svg width="16" height="18"><path d="M5.500 4.500h9v7h-9zM10 12v3M6 15.500h8M2 2v5h3M3 7v6" fill="none" stroke="#fff" stroke-width="1.500"/></svg>
            <svg width="16" height="18"><path d="M5 2l3 2-3 2-3-2zM11 2l3 2-3 2-3-2zM5 7l3 2-3 2-3-2zM11 7l3 2-3 2-3-2zM8 11l3 2-3 2-3-2z" fill="#fff"/></svg>
            <svg width="16" height="18"><path d="M2 1v15" stroke="#fff" stroke-width="1.500"/><path d="M3 2h6v6H3zM9 4h6l-2 5H9z" fill="#fff"/></svg>
            <svg width="16" height="18"><path d="M4 11h8L8 7z" fill="#fff"/></svg>
        </div>
        <span class="lang">HE</span>
        <div class="apps">
            <button class="run" aria-label="Check"><svg viewBox="0 0 32 32"><circle cx="16" cy="16" r="14" fill="url(#gGreen)" stroke="#4c8c10"/><path d="M9 17l5 5 9-12" fill="none" stroke="#fff" stroke-width="3"/></svg></button>
            <button aria-label="Search"><svg viewBox="0 0 32 32"><path d="M6 2h16l5 5v23H6z" fill="#fff" stroke="#bbb"/><circle cx="16" cy="13" r="7" fill="#fff8d0" stroke="#f09010" stroke-width="3.500"/><path d="M11 18l-6 9" stroke="#e07808" stroke-width="5"/></svg></button>
            <button class="run" aria-label="PitStop"><span class="ps">ps</span></button>
            <button aria-label="CCleaner"><svg viewBox="0 0 32 32"><path d="M27 9A11 11 0 1 0 27 23" fill="none" stroke="#d83828" stroke-width="7"/><path d="M20 1l4 1-5 15-4-1z" fill="#2878b8"/><path d="M12 14l9 4-6 12Q6 31 1 25q7-3 11-11z" fill="#f0d8a8" stroke="#b89050"/></svg></button>
            <button aria-label="Clover"><svg viewBox="0 0 32 32"><g fill="#78c038" stroke="#4c9820"><path id="leaf" d="M16 15Q6 13 8 4q4-4 8 1 4-5 8-1 2 9-8 11z"/><use href="#leaf" transform="rotate(90 16 15)"/><use href="#leaf" transform="rotate(180 16 15)"/><use href="#leaf" transform="rotate(270 16 15)"/></g><path d="M16 15q-2 8-5 16" fill="none" stroke="#4c9820" stroke-width="2"/></svg></button>
            <button class="run" aria-label="Acrobat"><svg viewBox="0 0 32 32"><path d="M3 2h26v28H3z" fill="#f4f4f4" stroke="#aaa"/><path d="M15 6q-2 0 0 6-3 9-9 13 1-5 9-7 6-2 12 1-7 1-12-7 2-6 0-6z" fill="none" stroke="#c81818" stroke-width="1.500"/></svg></button>
            <button class="run" aria-label="Illustrator"><span class="app ai">Ai</span></button>
            <button class="run" aria-label="CorelDRAW"><svg viewBox="0 0 32 32"><ellipse cx="15" cy="16" rx="14" ry="15" fill="#48a830"/><path d="M8 6l7-3-7 18-6-4zM17 4l7 3-6 16-8-1zM25 10l4 6-6 8z" fill="#f4fff0"/><path d="M24 18l6 2q0 8-6 11-6-3-6-11z" fill="#2f78d0" stroke="#fff"/><path d="M24 19v6h-5l-1-5zM24 25h5q-2 4-5 5z" fill="#f8c818"/></svg></button>
            <button class="run front" aria-label="InDesign"><span class="app id">Id</span></button>
            <button class="run" aria-label="Chrome"><svg viewBox="0 0 32 32"><circle cx="16" cy="16" r="14" fill="#f8c820"/><path d="M16 16L4 9A14 14 0 0 1 28.500 10H16z" fill="#dc4638"/><path d="M16 16L4 9A14 14 0 0 0 15 30l7-12z" fill="#30a050"/><circle cx="16" cy="16" r="6.500" fill="#fff"/><circle cx="16" cy="16" r="5" fill="#4484f0"/></svg></button>
            <button aria-label="Word"><span class="word">W</span></button>
            <button class="run" aria-label="Photoshop"><span class="app psd">Ps</span></button>
            <button aria-label="Explorer"><svg viewBox="0 0 36 32"><path d="M2 7h4l2-4h8l2 3h14v22H2z" fill="#f4d878" stroke="#c8a040"/><path d="M10 4h5v3h-5z" fill="#38a848"/><path d="M20 5h9v3h-9z" fill="#58a8e8"/><path d="M3 10h29v18H3z" fill="#fbeeb0"/><path d="M9 30V19h18v11h-5v-6h-8v6z" fill="#98d4f0" stroke="#58a8d0"/></svg></button>
            <button aria-label="System monitor"><svg viewBox="0 0 32 32"><path d="M3 3l6-2v22l-6-3z" fill="#ccc" stroke="#777"/><path d="M8 4l21-1 1 18-20 2z" fill="#ddd" stroke="#888"/><path d="M11 6l16-1 1 14-16 1z" fill="#0b3a14"/><path d="M12 15l3-2 2-5 2 8 3-8 2 7 3-3" fill="none" stroke="#38e058" stroke-width="1.500"/><path d="M16 23l6 0 3 5-10 2z" fill="#eee" stroke="#999"/></svg></button>
            <button aria-label="Bridge"><span class="app br">Br</span></button>
            <button aria-label="Start"><svg class="orb" viewBox="0 0 40 40"><circle cx="20" cy="20" r="18" fill="url(#gOrb)" stroke="#0c3458"/><path d="M11 12q4-3 8-1l-1 8q-4-2-9 1z" fill="#f06828"/><path d="M21 12q5 2 9 0l-2 8q-4 2-8 0z" fill="#8cc838"/><path d="M9 22q4-3 8-1l-1 8q-4-2-8 0z" fill="#40a0f0"/><path d="M20 22q4 2 8 0l-2 8q-4 2-7 0z" fill="#f8d030"/></svg></button>
        </div>
    </div>
    <script src="script.js"></script>
</body>
</html>
```

FILE: styles.css
```css
* {
    box-sizing: border-box;
}
body {
    margin: 0;
    height: 100vh;
    display: flex;
    flex-direction: column;
    overflow: hidden;
    font-family: "Noto Sans", "Open Sans", "DejaVu Sans", sans-serif;
    font-size: 10px;
    color: #111;
    background: #dcdcdc;
}
button, input, select {
    font: inherit;
    color: inherit;
    margin: 0;
    padding: 0;
    border: 0;
    border-radius: 0;
    background: none;
    outline: none;
    appearance: none;
}
button {
    display: flex;
    align-items: center;
    justify-content: center;
}
svg {
    display: block;
    flex: none;
}
i {
    font-style: normal;
}
.defs {
    position: absolute;
    width: 0;
    height: 0;
}

/* menu bar */
.menubar {
    height: 32px;
    flex: none;
    display: flex;
    align-items: center;
    border-bottom: 1px solid #666;
    background: #dcdcdc;
    font-size: 12px;
}
.logo {
    width: 39px;
    padding-left: 8px;
    font: bold 20px/28px "Open Sans", sans-serif;
    color: #56304c;
    height: 31px;
}
.menubar nav {
    display: flex;
    width: 416px;
}
.menubar nav button {
    padding: 0 8px;
    color: #222;
}
.viewtools {
    display: flex;
    align-items: center;
    height: 20px;
    border-left: 1px solid #bbb;
    padding-left: 14px;
    flex: 1;
}
.viewtools > button {
    margin-right: 20px;
}
.viewtools .bridge {
    width: 16px;
    height: 15px;
    margin-right: 30px;
    border: 1px solid #333;
    background: #888;
    color: #111;
    font-size: 9px;
    font-weight: bold;
}
.zoom {
    position: relative;
    border-right: 1px solid #aaa;
    width: 53px;
    margin-right: 17px;
}
.zoom select {
    width: 40px;
    color: #444;
}
.zoom::after, .workspace::after {
    content: "";
    position: absolute;
    right: 13px;
    top: 6px;
    border: 4px solid transparent;
    border-top: 6px solid #222;
    border-bottom: 0;
}
.workspace {
    position: relative;
    height: 20px;
    width: 87px;
    padding-right: 13px;
    font: 13px "DejaVu Sans", sans-serif;
    color: #555;
    border-left: 1px solid #bbb;
    border-right: 1px solid #bbb;
}
.workspace::after {
    right: 12px;
    top: 9px;
    border-width: 4px 3px 0;
}
.search {
    width: 122px;
    height: 18px;
    margin: 0 11px 0 10px;
    display: flex;
    align-items: center;
    padding-left: 2px;
    border: 1px solid #77776a;
    background: #bcbcbc;
    border-radius: 2px;
}
.search input {
    width: 90px;
}
.winbtns {
    align-self: flex-start;
    display: flex;
    margin-right: 2px;
    height: 19px;
    border: 1px solid #777;
    border-top: 0;
    border-radius: 0 0 5px 5px;
    background: linear-gradient(#ddd, #eee 50%, #ccc);
}
.winbtns button {
    width: 28px;
    border-right: 1px solid #888;
}
.winbtns .close {
    width: 46px;
    border: 0;
}

/* control panel */
.control {
    height: 47px;
    flex: none;
    display: flex;
    align-items: center;
    background: #f0f0f0;
    border-left: 1px solid #666;
    border-bottom: 1px solid #666;
}
.grp {
    display: grid;
    grid-template-rows: 17px 17px;
    row-gap: 4px;
    align-items: center;
    flex: none;
    height: 38px;
    position: relative;
}
.sep {
    border-left: 1px solid #999;
}
.grp > svg, .grp > button {
    justify-self: start;
}
.grp label {
    color: #333;
    font-weight: 500;
}
.grp input, .grp select {
    font-family: "Liberation Sans", sans-serif;
    color: #000;
}
.grp input {
    height: 17px;
    width: 100%;
    border: 1px solid #aaaab0;
    background: #fff;
    padding-left: 2px;
}
.spin {
    width: 11px;
    height: 17px;
}
.dim {
    filter: grayscale(1) opacity(0.6);
}
.combo {
    position: relative;
    display: block;
    width: 65px;
    height: 17px;
    border: 1px solid #dde;
    background: #fff;
}
.combo select {
    width: 100%;
    height: 15px;
    padding-left: 4px;
    display: block;
}
.combo::after {
    content: "";
    position: absolute;
    right: 4px;
    top: 7px;
    border: 4px solid transparent;
    border-top: 5px solid #000;
    border-bottom: 0;
    pointer-events: none;
}
.on {
    border: 1px solid #555;
    border-radius: 3px;
    background: #d4d4d4;
    box-shadow: inset 0 0 2px #888;
}
.g-ref {
    display: flex;
    width: 53px;
    padding-left: 4px;
    gap: 13px;
}
.vgrip {
    width: 3px;
    height: 20px;
    background: repeating-linear-gradient(#999 0 1px, transparent 1px 2px);
}
.g-xy {
    grid-template-columns: 12px 11px 66px 21px 11px 66px;
    column-gap: 0;
}
.g-xy input {
    margin-left: 1px;
    width: 65px;
}
.g-xy label:nth-of-type(even) {
    padding-left: 7px;
}
.constrain {
    width: 26px;
}
.g-scale {
    grid-template-columns: 20px 13px 65px;
    padding-left: 5px;
}
.link {
    width: 18px;
    height: 22px;
    margin: 0 4px;
}
.g-angle {
    grid-template-columns: 19px 13px 69px;
}
.g-rotate {
    grid-template-columns: 24px 24px 26px;
    padding: 0 2px 0 8px;
}
.pbox {
    position: relative;
    grid-row: 1 / 3;
    grid-column: 3;
}
.pbox span {
    position: absolute;
    font: 24px "Liberation Serif", serif;
    left: 6px;
    top: 0;
}
.g-tree {
    grid-template-columns: 24px 24px;
    padding-left: 7px;
}
.g-swatch {
    grid-template-columns: 23px 15px;
    padding-left: 5px;
}
.g-stroke {
    grid-template-columns: 13px 66px;
    padding: 0 5px 0 8px;
}
.wide {
    grid-column: span 2;
    width: 79px;
}
.line::before {
    content: "";
    position: absolute;
    left: 4px;
    top: 4px;
    width: 54px;
    height: 8px;
    background: #000;
}
.g-fx {
    grid-template-columns: 25px 24px 10px 15px;
    padding-left: 6px;
}
.fx {
    font: italic bold 15px "Liberation Serif", serif;
    grid-column: 3 / 5;
    color: #333;
}
.g-fx input {
    width: 33px;
    margin-left: -6px;
}
.g-fx > svg:last-child {
    grid-column: 4;
    margin-left: -4px;
}
.g-wrap {
    grid-template-columns: 29px 22px;
    padding-left: 3px;
}
.g-wrap button, .g-just button, .g-one button {
    width: 22px;
    height: 17px;
}
.g-wrap button:nth-child(even) {
    justify-content: flex-start;
}
.g-corner {
    grid-template-columns: 21px 12px 50px;
    padding-left: 5px;
    padding-right: 7px;
}
.cornershape {
    grid-column: 2 / 4;
    width: 43px;
}
.cornershape::before {
    content: "";
    position: absolute;
    left: 4px;
    top: 5px;
    width: 15px;
    height: 5px;
    border: 1px solid #333;
    border-width: 1px 1px 0 0;
}
.g-cols {
    grid-template-columns: 20px 12px 39px;
    padding: 0 4px 0 5px;
}
.g-one {
    padding: 0 4px;
}
.g-just {
    grid-template-columns: 26px 24px;
    padding: 0 1px 0 4px;
}
.g-fit {
    width: 27px;
    padding-left: 5px;
}
.g-align {
    grid-template-columns: repeat(4, 24px);
    padding: 0 2px 0 6px;
}
.g-end {
    flex: 1;
    display: flex;
    justify-content: flex-end;
    padding-right: 4px;
}
.panelmenu {
    margin-left: 7px;
    padding-left: 6px;
    height: 36px;
    border-left: 1px solid #999;
}

/* workspace */
.work {
    flex: 1;
    min-height: 0;
    display: flex;
    border-bottom: 1px solid #666;
}
.bar {
    height: 12px;
    background: linear-gradient(#a6a6a6, #8e8e8e);
    border-bottom: 1px solid #666;
    padding: 2px 5px;
}
.hgrip {
    display: block;
    width: 20px;
    height: 3px;
    margin: 0 auto;
    background: repeating-linear-gradient(90deg, #888 0 1px, transparent 1px 2px);
}
.toolbox {
    width: 59px;
    flex: none;
    border-left: 1px solid #666;
    border-right: 3px solid #777;
}
.tools {
    background: #f0f0f0;
    padding: 4px 3px 0;
}
.tools .hgrip {
    margin-bottom: 5px;
}
.toolset {
    display: grid;
    grid-template-columns: 24px 25px;
    grid-auto-rows: 21px;
    padding: 4px 0 2px;
    border-top: 1px solid #aaa;
}
.hgrip + .toolset {
    border: 0;
}
.toolset .on {
    height: 19px;
}
.more {
    position: relative;
}
.more::after {
    content: "";
    position: absolute;
    right: 0;
    bottom: 2px;
    border: 2px solid #000;
    border-color: transparent #000 #000 transparent;
}
.type span {
    font: 19px/17px "Liberation Serif", serif;
    border-bottom: 1px solid #444;
    width: 16px;
    color: #333;
}
.strip {
    border-top: 1px solid #aaa;
}
.row {
    display: flex;
    align-items: center;
}
.colors {
    height: 54px;
    padding: 5px 3px;
}
.fmt {
    height: 20px;
    gap: 8px;
    padding-left: 8px;
}
.fmt .on {
    width: 14px;
    height: 14px;
}
.t {
    font: bold 13px "Liberation Serif", serif;
}
.apply {
    height: 24px;
    padding-left: 3px;
    gap: 6px;
}
.apply .on {
    width: 16px;
    height: 15px;
}
.modes {
    height: 29px;
}
.modes button {
    width: 26px;
    height: 18px;
}
.modes .on {
    width: 24px;
}

/* document window */
.doc {
    flex: 1;
    min-width: 0;
    display: flex;
    flex-direction: column;
}
.tabs {
    display: flex;
    height: 19px;
    flex: none;
    background: linear-gradient(#a8a8a8, #9a9a9a);
    border-bottom: 1px solid #777;
}
.tab {
    width: 129px;
    justify-content: flex-start;
    padding: 0 6px 0 10px;
    font-size: 11px;
    font-weight: 600;
    color: #333;
    border-right: 1px solid #777;
    white-space: nowrap;
}
.tab i {
    margin-left: auto;
    font-size: 14px;
}
.tab.active {
    background: #dcdcdc;
    color: #222;
}
.sheet {
    flex: 1;
    min-height: 0;
    display: grid;
    grid-template: 17px 1fr / 16px 1fr 15px;
}
.origin {
    background: #fff;
}
.hruler, .vruler {
    width: 100%;
    height: 100%;
    background: #fff;
    font: 10px "Liberation Sans", sans-serif;
}
.hruler {
    border-bottom: 1px solid #000;
}
.vruler {
    grid-row: 2;
    border-right: 1px solid #000;
    min-height: 0;
}
.canvas {
    position: relative;
    overflow: hidden;
    background: linear-gradient(#b8b8b8 0 33px, #000 33px 34px, #fff 34px);
}
.vscroll {
    grid-column: 3;
    grid-row: 1 / 3;
    display: flex;
    flex-direction: column;
    justify-content: space-between;
    background: #f0f0f0;
    border-left: 1px solid #f0f0f0;
}
.vscroll button {
    height: 19px;
}
.vscroll .thumb {
    height: 490px;
    margin-bottom: auto;
    border: 1px solid #888;
    border-radius: 2px;
    background: repeating-linear-gradient(#555 0 1px, transparent 1px 3px) center / 5px 7px no-repeat, linear-gradient(90deg, #f4f4f4, #c4c4c8);
}
.page {
    position: absolute;
    left: 328px;
    top: 105px;
    width: 596px;
    height: 842px;
    border: 1px solid #555;
    border-top-color: #f050f0;
    border-right-color: #8030c0;
    box-shadow: 2px 2px #000;
}
.frame {
    position: absolute;
    left: 430px;
    top: 179px;
    width: 352px;
    height: 371px;
    border: 1px solid #4f94f8;
    display: grid;
    grid-template-columns: 1fr 169px;
    column-gap: 11px;
    font: 10px/12px "Liberation Sans", "DejaVu Sans", sans-serif;
    color: #000;
}
.col {
    display: grid;
    grid-template-rows: repeat(26, 1fr);
    height: 374px;
    text-align: center;
}
.col p {
    margin: 0;
    white-space: nowrap;
}
.col i {
    color: #4f94f8;
    font-weight: bold;
}
.handles {
    position: absolute;
    left: -8px;
    top: -8px;
}

/* story panel */
.story {
    position: absolute;
    left: 954px;
    top: 253px;
    width: 209px;
    height: 108px;
    border: 1px solid #666;
    border-radius: 4px 4px 0 0;
    background: #f0f0f0;
    box-shadow: 0 1px 3px #999;
}
.storybar {
    height: 13px;
    display: flex;
    justify-content: flex-end;
    padding: 2px 4px;
    background: linear-gradient(#999, #888);
    border-bottom: 1px solid #666;
}
.storytabs {
    height: 17px;
    background: #a4a4a4;
    border-bottom: 1px solid #888;
}
.storytabs b {
    display: block;
    width: 41px;
    height: 17px;
    padding-left: 6px;
    font: bold 11px/17px Lato, sans-serif;
    background: #f0f0f0;
    border-right: 1px solid #777;
}
.storybody {
    padding: 5px 6px 0 5px;
}
.check {
    display: flex;
    align-items: center;
    gap: 3px;
    height: 14px;
    margin-left: 1px;
    font-family: "Liberation Sans", sans-serif;
    color: #000;
}
.check input {
    width: 12px;
    height: 12px;
    border: 1px solid #888;
    background: linear-gradient(135deg, #ccc, #fff);
}
.storybody .row {
    height: 30px;
    gap: 2px;
    padding-top: 4px;
}
.storybody .spin {
    margin-left: 4px;
}
.storybody .combo {
    width: 58px;
    color: #777;
    border-color: #aaa;
}
.storybody .combo::after {
    border-top-color: #999;
}
.storybody .dirs {
    height: 28px;
    padding: 0 0 4px 2px;
    border-top: 1px solid #888;
    gap: 3px;
}
.dirs button {
    width: 24px;
    height: 18px;
}

/* status bar */
.status {
    height: 15px;
    flex: none;
    display: flex;
    align-items: center;
    background: #ececec;
    border-top: 1px solid #bbb;
}
.pageno {
    width: 98px;
    height: 14px;
    border: 0;
}
.pageno select {
    padding-left: 2px;
    height: 13px;
    line-height: 12px;
}
.open {
    margin: 0 8px 0 10px;
}
.lamp {
    width: 10px;
    height: 10px;
    border-radius: 50%;
    background: radial-gradient(#ddd, #999);
}
.flight {
    width: 56px;
    margin-left: 4px;
    font-family: "Liberation Sans", sans-serif;
    white-space: nowrap;
}
.drop {
    margin-left: 3px;
}
.hscroll {
    flex: 1;
    display: flex;
    height: 14px;
    background: #f0f0f0;
}
.hscroll .thumb {
    width: 68%;
    max-width: 611px;
    margin: 0 auto 0 138px;
    border: 1px solid #888;
    border-radius: 2px;
    background: repeating-linear-gradient(90deg, #555 0 1px, transparent 1px 3px) center / 8px 6px no-repeat, linear-gradient(#f4f4f4, #c8c8cc);
}

/* panel dock */
.dock {
    width: 138px;
    flex: none;
    border-left: 3px solid #777;
    border-right: 1px solid #777;
}
.dock .bar {
    display: flex;
    justify-content: flex-end;
}
.set {
    background: #f0f0f0;
    border-bottom: 1px solid #666;
    padding-bottom: 4px;
}
.set .hgrip {
    width: 100%;
    height: 10px;
    margin-bottom: -2px;
    background: repeating-linear-gradient(90deg, #888 0 1px, transparent 1px 2px) 57px 4px / 20px 3px no-repeat, #dcdcdc;
}
.set button {
    width: 100%;
    height: 28px;
    padding-left: 10px;
    gap: 8px;
    justify-content: flex-start;
    font: bold 11px Lato, sans-serif;
    color: #222;
    white-space: nowrap;
}
.set svg {
    width: 19px;
    height: 18px;
}
.set em {
    width: 19px;
    font: italic bold 16px "Liberation Serif", serif;
    color: #444;
}
.xm {
    width: 18px;
    height: 18px;
    margin-right: 1px;
    border: 1px solid #333;
    background: #fff;
    font: 7px/8px "Liberation Serif", serif;
}

/* taskbar */
.taskbar {
    height: 40px;
    flex: none;
    display: flex;
    align-items: center;
    color: #fff;
    background: linear-gradient(rgba(255,255,255,0.4) 0 1px, transparent 1px), linear-gradient(90deg, #16507f, #22689c 12%, #2c79ad 20%, #4aa2d6 24%, #3a8ec8 32%, #378bd0 45%, #2c78c0 60%, #1f5eaa 72%, #1b5298 84%, #174888 93%, #0c2c54);
}
.desk {
    width: 14px;
    height: 38px;
    border: 1px solid #6aa4cc;
    background: linear-gradient(#3c78a8, #1a5080);
}
.clock {
    width: 92px;
    text-align: center;
    font-size: 12px;
    line-height: 17px;
}
.tray {
    display: flex;
    gap: 8px;
    margin: 2px 0 0 6px;
}
.lang {
    margin-left: 12px;
    font-size: 12px;
    padding-bottom: 5px;
}
.apps {
    margin: 0 -1px 0 auto;
    display: flex;
    gap: 4px;
}
.apps button {
    width: 58px;
    height: 38px;
}
.apps svg {
    width: 32px;
    height: 32px;
}
.apps .orb {
    width: 38px;
    height: 38px;
}
.run {
    border: 1px solid #10406c;
    border-radius: 3px;
    background: linear-gradient(135deg, rgba(255,255,255,0.5), rgba(255,255,255,0.1));
    box-shadow: inset 0 0 1px 1px rgba(255,255,255,0.5);
}
.front {
    background: linear-gradient(135deg, rgba(255,255,255,0.9), rgba(255,255,255,0.6));
}
.app {
    width: 28px;
    height: 28px;
    border: 2px solid;
    font: bold 17px/24px Lato, sans-serif;
    text-align: center;
}
.ai { color: #ff9a28; background: #281808; }
.id { color: #f040a0; background: #380820; }
.psd { color: #80c8ff; background: #081830; }
.br { color: #f8c000; background: #181808; }
.ps {
    width: 32px;
    height: 32px;
    border-radius: 5px 0 0 5px;
    border-right: 5px solid #f04080;
    background: #c80010;
    font: bold 17px/28px "Open Sans", sans-serif;
}
.word {
    width: 28px;
    height: 28px;
    background: linear-gradient(90deg, #fff 60%, #c8daf4);
    color: #2458a8;
    font: bold 24px/28px "Liberation Serif", serif;
}
```

FILE: script.js
```js
// millimetre rulers at 75% zoom
const MM = 2.8346;

function tick(x1, y1, x2, y2, dash) {
    return `<path d="M${x1} ${y1}L${x2} ${y2}" stroke="#000"${dash ? ' stroke-dasharray="1 1"' : ''}/>`;
}

function drawHorizontal(svg, zero, length) {
    let out = '';
    for (let mm = -120; zero + mm * MM < length; mm++) {
        const x = Math.round(zero + mm * MM) + 0.5;
        const top = mm % 10 === 0 ? 0 : mm % 5 === 0 ? 11 : 13;
        out += tick(x, top, x, 17);
        if (mm % 10 === 0) {
            out += `<text x="${x + 1}" y="10">${Math.abs(mm)}</text>`;
        }
    }
    svg.innerHTML = out + tick(1002.5, 0, 1002.5, 17, true);
}

function drawVertical(svg, zero, length) {
    let out = '';
    for (let mm = -40; zero + mm * MM < length; mm++) {
        const y = Math.round(zero + mm * MM) + 0.5;
        const left = mm % 10 === 0 ? 0 : mm % 5 === 0 ? 11 : 13;
        out += tick(left, y, 16, y);
        if (mm % 10 === 0) {
            String(Math.abs(mm)).split('').forEach((digit, i) => {
                const base = y + 9 + i * 8;
                if (base > 4 && base < length) {
                    out += `<text x="2" y="${base}">${digit}</text>`;
                }
            });
        }
    }
    svg.innerHTML = out + tick(0, 350.5, 16, 350.5, true);
}

const canvas = document.getElementById('canvas');
drawHorizontal(document.getElementById('hruler'), 328, canvas.clientWidth);
drawVertical(document.getElementById('vruler'), 105, canvas.clientHeight);
```
